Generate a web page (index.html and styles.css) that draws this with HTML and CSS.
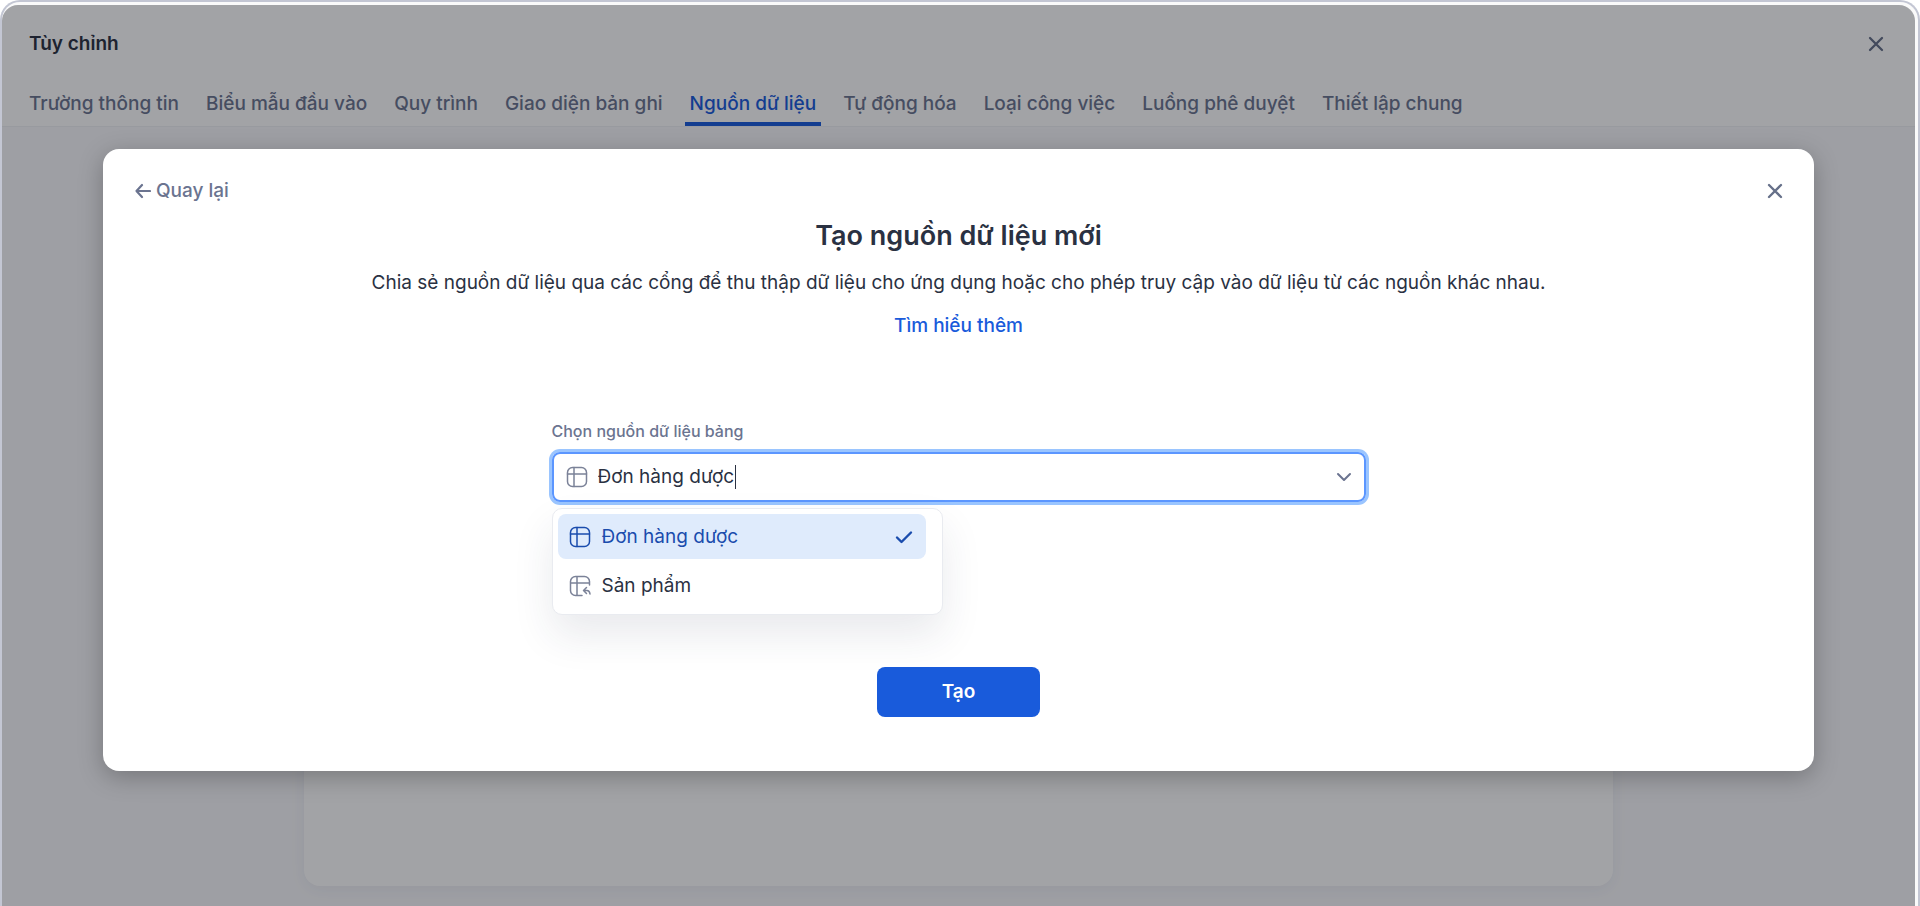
FILE: index.html
```html
<!DOCTYPE html>
<html lang="vi">
<head>
<meta charset="utf-8">
<title>Tùy chỉnh</title>
<link rel="stylesheet" href="styles.css">
</head>
<body>
<div class="frame">
  <div class="panel">
    <header class="header">
      <div class="header-top">
        <h1 class="header-title">Tùy chỉnh</h1>
        <button class="icon-button" type="button" aria-label="Đóng">
          <svg class="icon-close" viewBox="0 0 16 16"><path d="M2 2l12 12M14 2L2 14"/></svg>
        </button>
      </div>
      <nav class="tabs">
        <a class="tab" href="#">Trường thông tin</a>
        <a class="tab" href="#">Biểu mẫu đầu vào</a>
        <a class="tab" href="#">Quy trình</a>
        <a class="tab" href="#">Giao diện bản ghi</a>
        <a class="tab tab-active" href="#" aria-current="page">Nguồn dữ liệu</a>
        <a class="tab" href="#">Tự động hóa</a>
        <a class="tab" href="#">Loại công việc</a>
        <a class="tab" href="#">Luồng phê duyệt</a>
        <a class="tab" href="#">Thiết lập chung</a>
      </nav>
    </header>
    <main class="content"><div class="card"></div></main>

    <div class="overlay">
      <section class="dialog" role="dialog" aria-modal="true" aria-labelledby="dialog-title">
        <div class="dialog-bar">
          <button class="back" type="button">
            <svg class="icon-back" viewBox="0 0 16 16"><path d="M7 2L1.500 8 7 14M1.500 8H15"/></svg>
            <span>Quay lại</span>
          </button>
          <button class="icon-button" type="button" aria-label="Đóng hộp thoại">
            <svg class="icon-close" viewBox="0 0 16 16"><path d="M2 2l12 12M14 2L2 14"/></svg>
          </button>
        </div>
        <h2 class="dialog-title" id="dialog-title">Tạo nguồn dữ liệu mới</h2>
        <p class="description">Chia sẻ nguồn dữ liệu qua các cổng để thu thập dữ liệu cho ứng dụng hoặc cho phép truy cập vào dữ liệu từ các nguồn khác nhau.</p>
        <a class="more" href="#">Tìm hiểu thêm</a>

        <form class="form">
          <label class="label" for="source">Chọn nguồn dữ liệu bảng</label>
          <div class="combo">
            <svg class="icon-table" viewBox="0 0 22 22"><rect x="1.500" y="1.500" width="19" height="19" rx="5"/><path d="M1.500 8h19M8 1.500v19"/></svg>
            <div class="entry">
              <input class="entry-input" id="source" type="text" role="combobox" aria-expanded="true" aria-controls="sources" value="Đơn hàng dược">
              <span class="caret"></span>
            </div>
            <button class="toggle" type="button" aria-label="Mở danh sách">
              <svg class="icon-chevron" viewBox="0 0 16 16"><path d="M2 5l6 6 6-6"/></svg>
            </button>
            <div class="menu" id="sources" role="listbox">
              <button class="option option-selected" type="button" role="option" aria-selected="true">
                <svg class="icon-table" viewBox="0 0 22 22"><rect x="1.500" y="1.500" width="19" height="19" rx="5"/><path d="M1.500 8h19M8 1.500v19"/></svg>
                <span class="option-text">Đơn hàng dược</span>
                <svg class="icon-check" viewBox="0 0 18 18"><path d="M2 9.500l4.500 4.500L16 4.500"/></svg>
              </button>
              <button class="option" type="button" role="option" aria-selected="false">
                <svg class="icon-table" viewBox="0 0 22 22"><path d="M20.500 10V6.500a5 5 0 0 0-5-5h-9a5 5 0 0 0-5 5v9a5 5 0 0 0 5 5H13M1.500 8h19M8 1.500v19"/><path d="M17.500 12.500L14.500 15.500l3 3M15 15.500h3q2.500 0 3 3.500"/></svg>
                <span class="option-text">Sản phẩm</span>
              </button>
            </div>
          </div>
          <button class="submit" type="button">Tạo</button>
        </form>
      </section>
    </div>
  </div>
</div>
</body>
</html>
```
FILE: styles.css
```css
* {
  box-sizing: border-box;
}

body {
  margin: 0;
  height: 100vh;
  overflow: hidden;
  background: #fff;
  color: #2a3142;
  font: 19px/28px Inter, "Noto Sans", sans-serif;
}

h1, h2, p {
  margin: 0;
}

button {
  border: 0;
  padding: 0;
  background: none;
  color: inherit;
  font: inherit;
  cursor: pointer;
}

a {
  text-decoration: none;
}

svg {
  flex: none;
  fill: none;
  stroke: currentColor;
  stroke-linecap: round;
  stroke-linejoin: round;
}

.frame {
  height: 100vh;
  padding: 3px 3px 0 0;
  border: 2px solid #c3c6d3;
  border-bottom: 0;
  border-radius: 20px 20px 0 0;
  background: #fafafa;
}

.panel {
  position: relative;
  display: flex;
  flex-direction: column;
  height: 100%;
  overflow: hidden;
  border-radius: 16px 16px 0 0;
  background: #f9f9fc;
}

.header {
  border-bottom: 1px solid #eff0f4;
  background: #fff;
}

.header-top {
  display: flex;
  align-items: center;
  justify-content: space-between;
  padding: 25px 27px 0;
}

.header-title {
  font-size: 19px;
  font-weight: 600;
  line-height: 28px;
}

.icon-button {
  display: flex;
  padding: 4px;
  color: #667089;
}

.icon-close {
  width: 16px;
  height: 16px;
  stroke-width: 2.3;
}

.tabs {
  display: flex;
  gap: 17px;
  padding: 28px 22px 0;
}

.tab {
  padding: 4px 5px;
  border-bottom: 4px solid transparent;
  color: #6b7490;
  font-weight: 500;
  white-space: nowrap;
}

.tab-active {
  border-color: #195bdb;
  color: #195bdb;
}

.content {
  flex: 1;
  display: flex;
  padding: 32px 302px 20px;
}

.card {
  flex: 1;
  border-radius: 16px;
  background: #fff;
  box-shadow: 0 4px 16px rgba(40, 50, 90, 0.06);
}

.overlay {
  position: absolute;
  inset: 0;
  padding: 144px 101px 0;
  background: rgba(10, 13, 21, 0.38);
}

.dialog {
  display: flex;
  flex-direction: column;
  align-items: center;
  padding: 28px 27px 54px;
  border-radius: 16px;
  background: #fff;
  box-shadow: 0 6px 24px rgba(0, 0, 0, 0.26);
}

.dialog-bar {
  display: flex;
  align-items: center;
  align-self: stretch;
  justify-content: space-between;
}

.back {
  display: flex;
  align-items: center;
  gap: 5px;
  padding-left: 5px;
  color: #6b7490;
  font-weight: 500;
}

.icon-back {
  width: 16px;
  height: 16px;
  stroke-width: 2.2;
}

.dialog-title {
  padding-top: 13px;
  font-size: 27px;
  font-weight: 600;
  line-height: 36px;
}

.description {
  padding-top: 15px;
}

.more {
  padding-top: 15px;
  color: #195bdb;
  font-weight: 500;
}

.form {
  display: flex;
  flex-direction: column;
  width: 814px;
  max-width: 100%;
  padding-top: 79px;
}

.label {
  color: #6b7490;
  font-size: 16px;
  font-weight: 500;
  line-height: 24px;
}

.combo {
  position: relative;
  display: flex;
  align-items: center;
  gap: 10px;
  height: 50px;
  margin-top: 9px;
  padding: 0 12px;
  border: 2px solid #5b96ff;
  border-radius: 8px;
  box-shadow: 0 0 0 3px #9ac5ff;
}

.icon-table {
  width: 22px;
  height: 22px;
  color: #7b8298;
  stroke-width: 1.5;
}

.entry {
  flex: 1;
  display: flex;
  align-items: center;
}

.entry-input {
  width: 137px;
  padding: 0;
  border: 0;
  outline: 0;
  background: none;
  color: #2a3142;
  font: inherit;
}

.caret {
  width: 1px;
  height: 24px;
  background: #2a3142;
}

.toggle {
  display: flex;
}

.icon-chevron {
  width: 16px;
  height: 16px;
  color: #6b7490;
  stroke-width: 2;
}

.menu {
  position: absolute;
  top: 100%;
  left: -2px;
  display: flex;
  flex-direction: column;
  gap: 4px;
  width: 391px;
  margin-top: 8px;
  padding: 5px 16px 6px 5px;
  border: 1px solid #e9ebf0;
  border-radius: 10px;
  background: #fff;
  box-shadow: 0 20px 40px rgba(40, 50, 80, 0.1);
}

.option {
  display: flex;
  align-items: center;
  gap: 11px;
  height: 45px;
  padding: 0 13px 0 11px;
  border-radius: 8px;
  text-align: left;
}

.option-text {
  flex: 1;
}

.option-selected,
.option-selected .icon-table {
  color: #1a4cad;
}

.option-selected {
  background: #dfebfc;
}

.icon-check {
  width: 18px;
  height: 18px;
  stroke-width: 2.4;
}

.submit {
  align-self: center;
  width: 163px;
  height: 50px;
  margin-top: 165px;
  border-radius: 8px;
  background: #195bdb;
  color: #fff;
  font-weight: 600;
}
```
